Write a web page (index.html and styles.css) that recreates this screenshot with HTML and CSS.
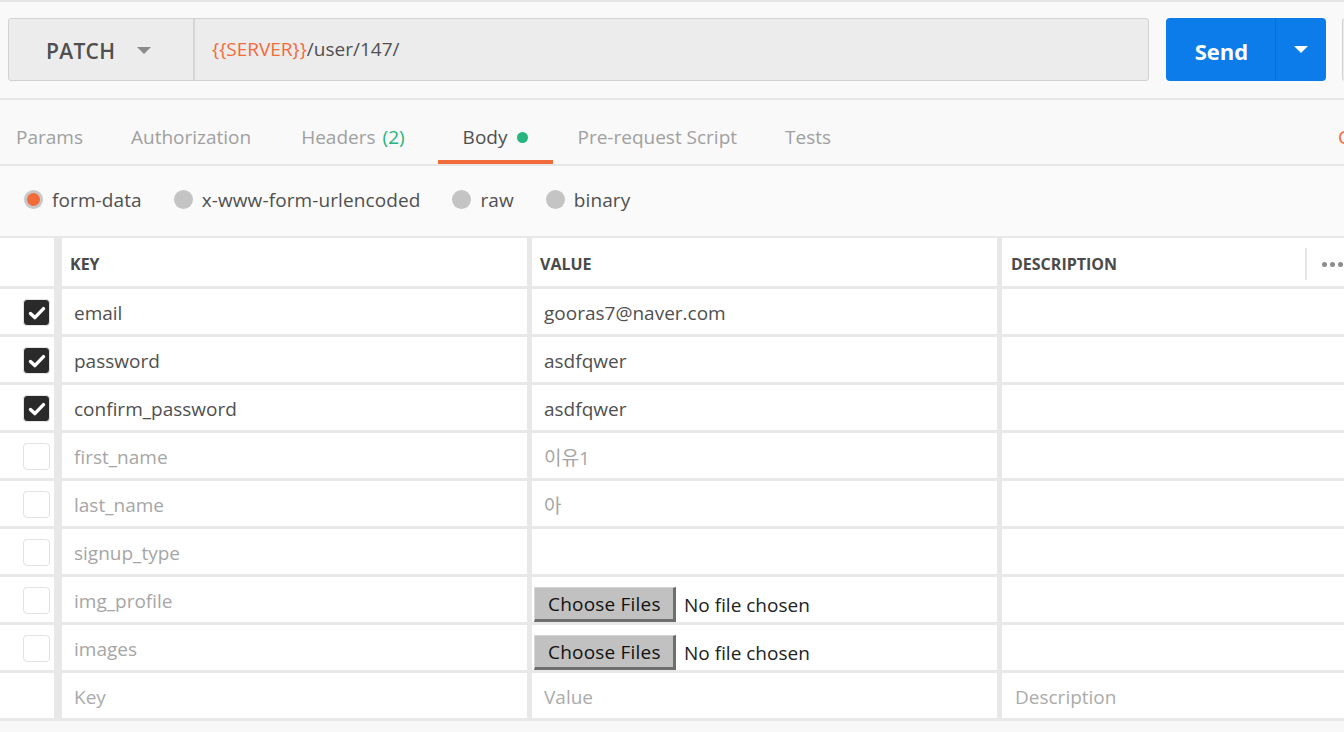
FILE: index.html
```html
<!DOCTYPE html>
<html lang="en">
<head>
<meta charset="utf-8">
<title>Postman request</title>
<link rel="stylesheet" href="styles.css">
</head>
<body>
<div class="topbar">
  <div class="urlbox">
    <div class="method"><span class="method-name">PATCH</span><span class="caret"></span></div>
    <div class="url"><span class="var">{{SERVER}}</span>/user/147/</div>
  </div>
  <div class="send">
    <div class="send-main">Send</div>
    <div class="send-drop"><span class="caret caret-white"></span></div>
  </div>
  <div class="save"></div>
</div>

<div class="tabs">
  <div class="tablist">
    <div class="tab">Params</div>
    <div class="tab">Authorization</div>
    <div class="tab tab-headers">Headers <span class="count">(2)</span></div>
    <div class="tab active">Body <span class="dot"></span></div>
    <div class="tab">Pre-request Script</div>
    <div class="tab">Tests</div>
  </div>
  <div class="tab-right"><span>Cookies</span><span>Code</span></div>
</div>

<div class="bodytypes">
  <div class="radio-item"><span class="radio on"></span>form-data</div>
  <div class="radio-item"><span class="radio"></span>x-www-form-urlencoded</div>
  <div class="radio-item"><span class="radio"></span>raw</div>
  <div class="radio-item"><span class="radio"></span>binary</div>
</div>

<div class="kv">
  <div class="cell head check-cell"></div>
  <div class="cell head key">KEY</div>
  <div class="cell head value">VALUE</div>
  <div class="cell head desc"><span class="desc-title">DESCRIPTION</span><span class="divider"></span><span class="dots"><i></i><i></i><i></i></span></div>

  <div class="cell check-cell"><span class="cb checked"><svg viewBox="0 0 26 26" width="26" height="26"><path d="M6.5 13.5 L10.8 17.6 L19.5 8.6" fill="none" stroke="#fff" stroke-width="3.4" stroke-linecap="round" stroke-linejoin="round"/></svg></span></div>
  <div class="cell key">email</div>
  <div class="cell value">gooras7@naver.com</div>
  <div class="cell desc"></div>

  <div class="cell check-cell"><span class="cb checked"><svg viewBox="0 0 26 26" width="26" height="26"><path d="M6.5 13.5 L10.8 17.6 L19.5 8.6" fill="none" stroke="#fff" stroke-width="3.4" stroke-linecap="round" stroke-linejoin="round"/></svg></span></div>
  <div class="cell key">password</div>
  <div class="cell value">asdfqwer</div>
  <div class="cell desc"></div>

  <div class="cell check-cell"><span class="cb checked"><svg viewBox="0 0 26 26" width="26" height="26"><path d="M6.5 13.5 L10.8 17.6 L19.5 8.6" fill="none" stroke="#fff" stroke-width="3.4" stroke-linecap="round" stroke-linejoin="round"/></svg></span></div>
  <div class="cell key">confirm_password</div>
  <div class="cell value">asdfqwer</div>
  <div class="cell desc"></div>

  <div class="cell check-cell"><span class="cb"></span></div>
  <div class="cell key off">first_name</div>
  <div class="cell value off">이유1</div>
  <div class="cell desc"></div>

  <div class="cell check-cell"><span class="cb"></span></div>
  <div class="cell key off">last_name</div>
  <div class="cell value off">아</div>
  <div class="cell desc"></div>

  <div class="cell check-cell"><span class="cb"></span></div>
  <div class="cell key off">signup_type</div>
  <div class="cell value off"></div>
  <div class="cell desc"></div>

  <div class="cell check-cell"><span class="cb"></span></div>
  <div class="cell key off">img_profile</div>
  <div class="cell value file"><span class="filebtn">Choose Files</span><span class="nofile">No file chosen</span></div>
  <div class="cell desc"></div>

  <div class="cell check-cell"><span class="cb"></span></div>
  <div class="cell key off">images</div>
  <div class="cell value file"><span class="filebtn">Choose Files</span><span class="nofile">No file chosen</span></div>
  <div class="cell desc"></div>

  <div class="cell check-cell"></div>
  <div class="cell key placeholder">Key</div>
  <div class="cell value placeholder">Value</div>
  <div class="cell desc placeholder">Description</div>
</div>
</body>
</html>
```

FILE: styles.css
```css
* { box-sizing: border-box; }

html, body {
  margin: 0;
  padding: 0;
}

body {
  width: 1344px;
  height: 732px;
  overflow: hidden;
  background: #f8f8f8;
  font-family: "Open Sans", "Noto Sans CJK KR", sans-serif;
  font-size: 19px;
  color: #505050;
}

/* ---------- top bar ---------- */
.topbar {
  display: flex;
  align-items: stretch;
  padding: 16px 0 17px 8px;
  border-top: 2px solid #e6e6e6;
  border-bottom: 2px solid #e6e6e6;
  background: #f9f9f9;
  overflow: hidden;
}

.urlbox {
  flex: none;
  width: 1141px;
  height: 63px;
  display: flex;
  background: #ececec;
  border: 1px solid #d2d2d2;
  border-radius: 3px;
}

.method {
  flex: none;
  width: 186px;
  display: flex;
  align-items: center;
  padding-left: 37px;
  padding-top: 2px;
  border-right: 2px solid #d6d6d6;
}

.method-name {
  font-size: 21px;
  font-weight: 600;
  color: #4f4f4f;
  letter-spacing: 0.3px;
}

.caret {
  display: inline-block;
  width: 0;
  height: 0;
  border-left: 7px solid transparent;
  border-right: 7px solid transparent;
  border-top: 7px solid #8a8a8a;
  margin-left: 22px;
  margin-top: 0;
}

.url {
  display: flex;
  align-items: center;
  padding-left: 17px;
  padding-bottom: 2px;
  font-size: 19px;
  color: #505050;
}

.var { color: #f26b3a; }

.send {
  flex: none;
  margin-left: 17px;
  width: 160px;
  height: 63px;
  display: flex;
  background: #0b7cea;
  border-radius: 4px;
  color: #fff;
}

.send-main {
  width: 110px;
  display: flex;
  align-items: center;
  justify-content: center;
  font-size: 22px;
  font-weight: 700;
  padding-left: 2px;
  padding-top: 2px;
  border-right: 1px solid #0a6ed4;
}

.send-drop {
  flex: 1;
  display: flex;
  align-items: center;
  justify-content: center;
}

.caret-white {
  border-top-color: #fff;
  margin: 0;
}

.save {
  flex: none;
  margin-left: 16px;
  width: 100px;
  height: 63px;
  background: #ececec;
  border: 1px solid #d2d2d2;
  border-radius: 3px;
}

/* ---------- tabs ---------- */
.tabs {
  display: flex;
  height: 66px;
  border-bottom: 2px solid #e6e6e6;
  background: #f9f9f9;
  overflow: hidden;
}

.tablist {
  flex: none;
  width: 1338px;
  display: flex;
}

.tab {
  display: flex;
  align-items: center;
  padding: 10px 24px 0;
  color: #a0a0a0;
  white-space: nowrap;
}

.tab:first-child { padding-left: 16px; }

.tab-headers { padding-left: 26px; padding-right: 33px; }

.tab .count {
  color: #26b47f;
  margin-left: 7px;
}

.tab.active {
  color: #505050;
  padding-left: 25px;
  padding-right: 25px;
  box-shadow: inset 0 -4px 0 #f26b3a;
}

.dot {
  display: inline-block;
  width: 11px;
  height: 11px;
  border-radius: 50%;
  background: #26b47f;
  margin-left: 10px;
}

.tab-right {
  flex: none;
  display: flex;
  gap: 24px;
  padding-top: 10px;
  align-items: center;
  color: #f26b3a;
  white-space: nowrap;
}

/* ---------- body types ---------- */
.bodytypes {
  height: 70px;
  display: flex;
  align-items: center;
  padding-left: 24px;
  padding-bottom: 3px;
  background: #fafafa;
}

.radio-item {
  display: flex;
  align-items: center;
  margin-right: 32px;
  color: #505050;
  letter-spacing: 0.1px;
}

.radio {
  display: inline-block;
  width: 19px;
  height: 19px;
  border-radius: 50%;
  background: #c4c4c4;
  margin-right: 9px;
}

.radio.on {
  background: #f26b3a;
  border: 3px solid #c8c8c8;
}

/* ---------- key/value table ---------- */
.kv {
  display: grid;
  grid-template-columns: 54px 473px 470px 1fr;
  border-top: 2px solid #e8e8e8;
  border-bottom: 3px solid #e8e8e8;
  background: #fff;
}

.cell {
  height: 48px;
  display: flex;
  align-items: center;
  padding-top: 2px;
  border-bottom: 3px solid #e8e8e8;
  white-space: nowrap;
  overflow: hidden;
}

.kv > .cell:nth-last-child(-n+4) {
  border-bottom: none;
  height: 45px;
}

.cell.head {
  height: 51px;
  padding-top: 4px;
  font-size: 16px;
  font-weight: 700;
  color: #4a4a4a;
}

.check-cell { padding-left: 23px; }

.key {
  border-left: 8px solid #e8e8e8;
  padding-left: 12px;
}

.value {
  border-left: 5px solid #e8e8e8;
  padding-left: 12px;
}

.desc {
  border-left: 5px solid #e8e8e8;
  padding-left: 13px;
}

.head.key { padding-left: 8px; }
.head.value { padding-left: 8px; }
.head.desc { padding-left: 9px; }

.desc-title { flex: 1; }

.divider {
  flex: none;
  width: 2px;
  height: 32px;
  background: #e6e6e6;
}

.dots {
  flex: none;
  width: 22px;
  margin-left: 15px;
  display: flex;
  gap: 3px;
  overflow: visible;
}

.dots i {
  flex: none;
  display: block;
  width: 5px;
  height: 5px;
  border-radius: 50%;
  background: #8c8c8c;
}

.off { color: #a6a6a6; }
.placeholder { color: #ababab; }

.cb {
  display: block;
  width: 27px;
  height: 27px;
  border: 1px solid #e2e2e2;
  border-radius: 4px;
  background: #fff;
}

.cb.checked {
  background: #2a2a2a;
  border-color: #e6e6e6;
}

.cb svg { display: block; margin: -0.5px 0 0 -0.5px; }

.value.file {
  align-items: flex-start;
  padding-top: 10px;
  padding-left: 2px;
}

.filebtn {
  display: flex;
  align-items: center;
  width: 142px;
  height: 35px;
  padding-left: 13px;
  background: #c1c1c1;
  border-top: 1px solid #d6d6d6;
  border-left: 1px solid #d6d6d6;
  border-right: 3px solid #6e6e6e;
  border-bottom: 3px solid #6e6e6e;
  color: #111;
  font-size: 19px;
  letter-spacing: 0.2px;
}

.nofile {
  display: flex;
  align-items: center;
  height: 35px;
  margin-left: 8px;
  color: #222;
}
```
